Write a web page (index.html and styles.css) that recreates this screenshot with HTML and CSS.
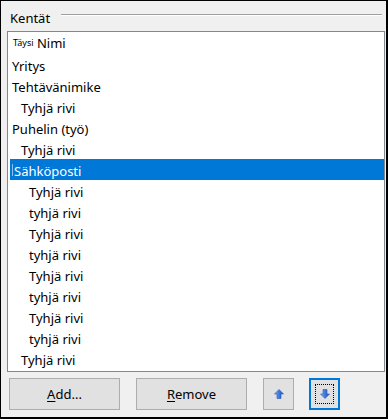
FILE: index.html
```html
<!DOCTYPE html>
<html>
<head>
<meta charset="utf-8">
<link rel="stylesheet" href="styles.css">
</head>
<body>
<div class="win">
  <div class="group-head">
    <span class="group-label"><span class="mn">K</span>entät</span>
    <span class="group-line"></span>
  </div>
  <div class="list">
    <div class="row first lvl0"><span class="small">Täysi</span> Nimi</div>
    <div class="row lvl0">Yritys</div>
    <div class="row lvl0">Tehtävänimike</div>
    <div class="row lvl1">Tyhjä rivi</div>
    <div class="row lvl0">Puhelin (työ)</div>
    <div class="row lvl1">Tyhjä rivi</div>
    <div class="row lvl0 sel"><span class="caret"></span>Sähköposti</div>
    <div class="row lvl2">Tyhjä rivi</div>
    <div class="row lvl2">tyhjä rivi</div>
    <div class="row lvl2">Tyhjä rivi</div>
    <div class="row lvl2">tyhjä rivi</div>
    <div class="row lvl2">Tyhjä rivi</div>
    <div class="row lvl2">tyhjä rivi</div>
    <div class="row lvl2">Tyhjä rivi</div>
    <div class="row lvl2">tyhjä rivi</div>
    <div class="row lvl1">Tyhjä rivi</div>
  </div>
  <div class="buttons">
    <button class="btn wide"><span class="mn">A</span>dd...</button>
    <button class="btn wide"><span class="mn">R</span>emove</button>
    <button class="btn icon">
      <svg width="10" height="10" viewBox="0 0 10 10">
        <defs>
          <linearGradient id="gu" x1="0" y1="0" x2="1" y2="0">
            <stop offset="0" stop-color="#8fb4f0"/>
            <stop offset="0.5" stop-color="#3c78dc"/>
            <stop offset="1" stop-color="#1e4fb0"/>
          </linearGradient>
        </defs>
        <path d="M5 0.5 L9.5 5 L7 5 L7 9.5 L3 9.5 L3 5 L0.5 5 Z" fill="url(#gu)" stroke="#2a56b8" stroke-width="0.6"/>
      </svg>
    </button>
    <button class="btn icon focus">
      <span class="focus-rect">
        <svg width="10" height="10" viewBox="0 0 10 10">
          <defs>
            <linearGradient id="gd" x1="0" y1="0" x2="1" y2="0">
              <stop offset="0" stop-color="#8fb4f0"/>
              <stop offset="0.5" stop-color="#3c78dc"/>
              <stop offset="1" stop-color="#1e4fb0"/>
            </linearGradient>
          </defs>
          <path d="M5 9.5 L9.5 5 L7 5 L7 0.5 L3 0.5 L3 5 L0.5 5 Z" fill="url(#gd)" stroke="#2a56b8" stroke-width="0.6"/>
        </svg>
      </span>
    </button>
  </div>
</div>
</body>
</html>
```

FILE: styles.css
```css
html, body {
  margin: 0;
  padding: 0;
  background: #000;
}
body {
  width: 388px;
  height: 419px;
  overflow: hidden;
  font-family: "Noto Sans", "Open Sans", sans-serif;
  font-size: 13px;
  color: #000;
}
.win {
  margin: 1px 2px 2px 1px;
  width: 385px;
  height: 416px;
  background: #f0f0f0;
  display: flex;
  flex-direction: column;
}
.group-head {
  display: flex;
  align-items: flex-start;
  height: 30px;
  padding-left: 9px;
}
.group-label {
  margin-top: 8px;
  line-height: 18px;
}
.mn {
  text-decoration: underline;
  text-underline-offset: 2px;
}
.group-label .mn {
  text-decoration: none;
}
.group-line {
  flex: 1;
  margin-top: 13px;
  margin-left: 11px;
  margin-right: 4px;
  height: 1px;
  background: #a0a0a0;
  border-bottom: 1px solid #ffffff;
}
.list {
  margin-left: 6px;
  width: 374px;
  height: 338px;
  border: 1px solid #828790;
  background: #fff;
  padding: 1px 0 0 2px;
  overflow: hidden;
}
.row {
  box-sizing: border-box;
  height: 21px;
  padding-top: 3px;
  line-height: 18px;
  white-space: nowrap;
  position: relative;
}
.row.first {
  padding-top: 1px;
}
.lvl0 { padding-left: 2px; }
.lvl1 { padding-left: 11px; }
.lvl2 { padding-left: 19px; }
.small {
  font-size: 9px;
  vertical-align: 2px;
  margin-left: 1px;
}
.sel {
  background: #0078d7;
  color: #fff;
  padding-left: 4px;
}
.caret {
  position: absolute;
  left: 2px;
  top: 5px;
  width: 1px;
  height: 12px;
  background: #8cc0f0;
}
.buttons {
  display: flex;
  align-items: flex-start;
  margin-top: 6px;
  padding-left: 8px;
}
.btn {
  height: 32px;
  margin: 0;
  border: 1px solid #adadad;
  background: #e1e1e1;
  font-family: inherit;
  font-size: 13px;
  color: #000;
  padding: 0;
  display: flex;
  align-items: center;
  justify-content: center;
}
.btn.wide {
  width: 111px;
  margin-right: 16px;
}
.btn.icon {
  width: 31px;
  margin-right: 15px;
}
.btn.focus {
  border: 2px solid #0078d7;
}
.focus-rect {
  width: 19px;
  height: 20px;
  border: 1px dotted #000;
  box-sizing: border-box;
  display: flex;
  align-items: center;
  justify-content: center;
}
svg { display: block; }
```
